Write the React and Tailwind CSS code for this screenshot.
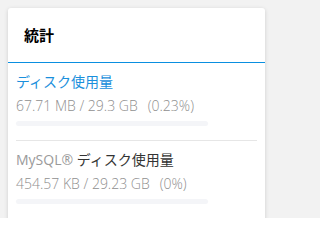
import React from "react";

function UsageRow({ title, used, total, percent, mysql }) {
  return (
    <div className="pt-[9px] pb-[14px]">
      <div className="text-[14px] leading-[20px]">
        {mysql ? (
          <>
            <span className="text-[#9a9a9a]">MySQL® </span>
            <span className="text-[#333]">{title}</span>
          </>
        ) : (
          <span className="text-[#1a8fdc]">{title}</span>
        )}
      </div>
      <div className="mt-[5px] text-[14px] font-light leading-[18px] text-[#8f8f8f]">
        {used} / {total}
        <span className="ml-[10px]">({percent})</span>
      </div>
      <div className="mt-[6px] h-[5px] w-[192px] rounded-full bg-[#f4f5f8]" />
    </div>
  );
}

export default function App() {
  return (
    <div
      className="h-[218px] w-full overflow-hidden bg-[#f2f2f2] px-2 pt-2"
      style={{ fontFamily: '"Open Sans", "Noto Sans CJK JP", sans-serif' }}
    >
      <div className="w-[257px] rounded-[3px] bg-white pb-6 shadow-[0_1px_4px_rgba(0,0,0,0.15)]">
        <div className="flex h-[54px] items-center px-4">
          <h3 className="text-[15px] font-bold text-black">統計</h3>
        </div>
        <div className="h-px bg-[#0a8fe0]" />
        <div className="px-2">
          <div className="border-b border-[#e6e6e6]">
            <UsageRow
              title="ディスク使用量"
              used="67.71 MB"
              total="29.3 GB"
              percent="0.23%"
            />
          </div>
          <UsageRow
            title="ディスク使用量"
            used="454.57 KB"
            total="29.23 GB"
            percent="0%"
            mysql
          />
        </div>
      </div>
    </div>
  );
}
